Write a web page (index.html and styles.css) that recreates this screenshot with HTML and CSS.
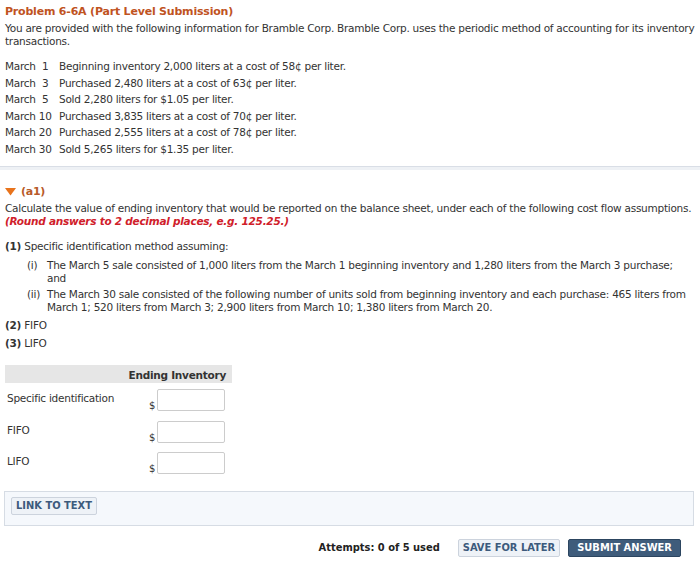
FILE: index.html
```html
<!DOCTYPE html>
<html>
<head>
<meta charset="utf-8">
<link rel="stylesheet" href="styles.css">
</head>
<body>
<div class="page">
  <section class="intro">
    <h1 class="title">Problem 6-6A (Part Level Submission)</h1>
    <p class="lead">You are provided with the following information for Bramble Corp. Bramble Corp. uses the periodic method of accounting for its inventory transactions.</p>
    <div class="events">
      <div class="ev"><span class="d">March&nbsp;&nbsp;1</span><span>Beginning inventory 2,000 liters at a cost of 58¢ per liter.</span></div>
      <div class="ev"><span class="d">March&nbsp;&nbsp;3</span><span>Purchased 2,480 liters at a cost of 63¢ per liter.</span></div>
      <div class="ev"><span class="d">March&nbsp;&nbsp;5</span><span>Sold 2,280 liters for $1.05 per liter.</span></div>
      <div class="ev"><span class="d">March 10</span><span>Purchased 3,835 liters at a cost of 70¢ per liter.</span></div>
      <div class="ev"><span class="d">March 20</span><span>Purchased 2,555 liters at a cost of 78¢ per liter.</span></div>
      <div class="ev"><span class="d">March 30</span><span>Sold 5,265 liters for $1.35 per liter.</span></div>
    </div>
  </section>
  <div class="sep"></div>
  <section class="part">
    <h2 class="part-title"><svg class="caret" width="11" height="8" viewBox="0 0 11 8"><polygon points="0,0 11,0 5.5,7.5" fill="#e8731c"/></svg>(a1)</h2>
    <p class="q">Calculate the value of ending inventory that would be reported on the balance sheet, under each of the following cost flow assumptions.<br><span class="hint">(Round answers to 2 decimal places, e.g. 125.25.)</span></p>
    <div class="list">
      <div class="li"><b>(1)</b> Specific identification method assuming:</div>
      <div class="sub"><span class="n">(i)</span><span>The March 5 sale consisted of 1,000 liters from the March 1 beginning inventory and 1,280 liters from the March 3 purchase; and</span></div>
      <div class="sub"><span class="n">(ii)</span><span>The March 30 sale consisted of the following number of units sold from beginning inventory and each purchase: 465 liters from March 1; 520 liters from March 3; 2,900 liters from March 10; 1,380 liters from March 20.</span></div>
      <div class="li"><b>(2)</b> FIFO</div>
      <div class="li"><b>(3)</b> LIFO</div>
    </div>
    <div class="tbl">
      <div class="th">Ending Inventory</div>
      <div class="tr"><span class="lbl">Specific identification</span><span class="cell"><span class="dol">$</span><span class="inp"></span></span></div>
      <div class="tr"><span class="lbl">FIFO</span><span class="cell"><span class="dol">$</span><span class="inp"></span></span></div>
      <div class="tr"><span class="lbl">LIFO</span><span class="cell"><span class="dol">$</span><span class="inp"></span></span></div>
    </div>
    <div class="linkbox"><span class="btn light">LINK TO TEXT</span></div>
    <div class="actions">
      <span class="att">Attempts: 0 of 5 used</span>
      <span class="btn light">SAVE FOR LATER</span>
      <span class="btn dark">SUBMIT ANSWER</span>
    </div>
  </section>
</div>
</body>
</html>
```

FILE: styles.css
```css
html, body { margin: 0; padding: 0; background: #fff; }
body { font-family: "DejaVu Sans", Verdana, sans-serif; font-size: 10.5px; letter-spacing: -0.25px; color: #333; }
.page { width: 700px; }
.intro { padding: 5px 5px 0 5px; }
.title { margin: 0; font-size: 11px; font-weight: bold; color: #c0531f; line-height: 14px; letter-spacing: -0.2px; }
.lead { margin: 3px 0 0 0; line-height: 13px; }
.events { margin-top: 10px; }
.ev { display: flex; line-height: 16.5px; }
.ev .d { width: 54px; white-space: pre; }
.sep { margin-top: 9px; height: 3px; border-top: 1px solid #d9dee6; background: #eef1f5; }
.part { padding: 0 5px; }
.part-title { margin: 15px 0 0 0; font-size: 11px; font-weight: bold; color: #b85a2a; display: flex; align-items: center; line-height: 14px; }
.caret { margin-right: 5px; }
.q { margin: 3px 0 0 0; line-height: 13px; }
.hint { color: #d0202a; font-weight: bold; font-style: italic; }
.list { margin-top: 9px; }
.li { line-height: 18px; }
.li b { color: #333; }
.sub { display: flex; padding-left: 22px; padding-right: 6px; line-height: 12.5px; margin: 4px 0 4px; }
.sub + .sub { margin-bottom: 3px; }
.sub .n { width: 20px; flex: none; }
.tbl { margin-top: 13px; width: 227px; }
.th { background: #e6e6e6; text-align: right; font-weight: bold; padding: 2px 6px 0 0; height: 16px; line-height: 16px; }
.tr { display: flex; justify-content: space-between; align-items: flex-start; height: 31.5px; margin-top: 0; }
.lbl { padding-left: 2px; padding-top: 9px; }
.cell { display: flex; align-items: flex-end; padding-top: 6px; padding-right: 7px; }
.dol { font-size: 10px; margin-right: 2px; line-height: 11px; }
.inp { width: 66px; height: 20px; border: 1px solid #ccc; border-radius: 2px; background: #fff; }
.linkbox { margin: 13px 0 0 -1px; border: 1px solid #d6dce4; background: #f5f8fc; height: 35px; padding: 5px 0 0 6px; box-sizing: border-box; width: 690px; }
.btn { display: inline-block; font-family: "Liberation Sans Narrow", "DejaVu Sans Condensed", sans-serif; font-weight: bold; font-size: 11px; letter-spacing: 0; line-height: 14px; padding: 1px 4px; border-radius: 2px; }
.btn.light { background: #eef2f7; border: 1px solid #ccd3dd; color: #3c5a7c; }
.btn.dark { background: #3f5c7b; border: 1px solid #2c4560; color: #fff; padding: 1px 8px; }
.actions { display: flex; justify-content: flex-end; align-items: center; gap: 8px; margin-top: 13px; padding-right: 14px; }
.att { font-family: "Liberation Sans Narrow", "DejaVu Sans Condensed", sans-serif; font-weight: bold; font-size: 11px; letter-spacing: 0; color: #222; margin-right: 10px; }
```
